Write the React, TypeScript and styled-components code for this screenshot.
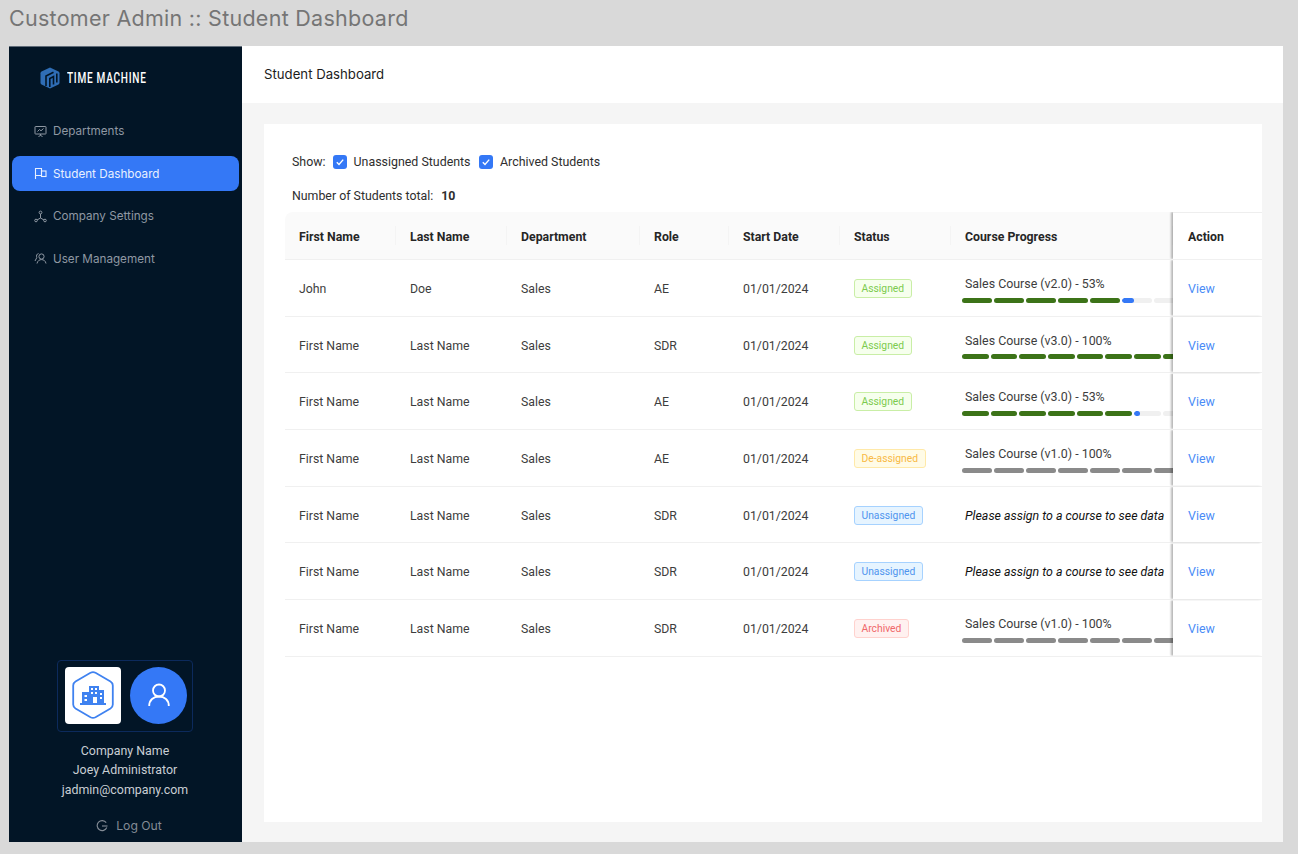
import React from 'react'
import styled, { createGlobalStyle } from 'styled-components'

const GlobalStyle = createGlobalStyle`
  html, body { margin: 0; padding: 0; background: #d9d9d9; }
  body { font-family: Roboto, "Liberation Sans", sans-serif; }
  * { box-sizing: border-box; }
`

const Page = styled.div`
  width: 1298px;
  height: 854px;
  overflow: hidden;
  padding: 0 15px 12px 9px;
  display: flex;
  flex-direction: column;
`
const PageTitle = styled.h1`
  margin: 0;
  height: 46px;
  padding-top: 5px;
  font: 400 21.5px/27px Inter, sans-serif;
  letter-spacing: 0.27px;
  color: #757575;
`
const Frame = styled.div`
  flex: 1;
  min-height: 0;
  display: flex;
`
const Sidebar = styled.aside`
  width: 233px;
  background: #021526;
  border-top: 1px solid #5f6b78;
  display: flex;
  flex-direction: column;
  align-items: center;
  padding: 0 3px 7px;
`
const Logo = styled.div`
  align-self: flex-start;
  height: 65px;
  padding: 0 0 3px 28px;
  display: flex;
  align-items: center;
  gap: 7px;
`
const LogoText = styled.span`
  display: inline-block;
  width: 80px;
  font: 500 14px/14px Roboto, sans-serif;
  color: #fff;
  white-space: nowrap;
  letter-spacing: 1px;
  transform: scaleX(0.72);
  transform-origin: left center;
`
const Nav = styled.nav`
  align-self: stretch;
  display: flex;
  flex-direction: column;
  gap: 7.5px;
  margin-top: 1.5px;
`
const NavItem = styled.a<{ $active?: boolean }>`
  height: 35px;
  padding-left: 22px;
  border-radius: 8px;
  display: flex;
  align-items: center;
  gap: 6px;
  font: 400 11.7px Inter, sans-serif;
  color: ${(p) => (p.$active ? '#e8f0ff' : '#8f98a3')};
  background: ${(p) => (p.$active ? '#3478f6' : 'transparent')};
  svg { flex: none; }
`
const Profile = styled.div`
  margin-top: auto;
  margin-right: 1px;
  width: 136px;
  height: 72px;
  border: 1px solid #0c2a5c;
  border-radius: 4px;
  padding: 6px 5px 6px 7px;
  display: flex;
  gap: 9px;
`
const CompanyTile = styled.div`
  flex: none;
  width: 56px;
  height: 57px;
  background: #fff;
  border-radius: 4px;
  display: flex;
  align-items: center;
  justify-content: center;
`
const Avatar = styled.div`
  flex: none;
  width: 57px;
  height: 57px;
  background: #3478f6;
  border-radius: 50%;
  display: flex;
  align-items: center;
  justify-content: center;
`
const ProfileText = styled.div`
  margin-top: 9px;
  margin-right: 1px;
  font: 400 12.4px/19.5px Roboto, sans-serif;
  color: #c9ced4;
  text-align: center;
`
const LogOut = styled.a`
  margin-top: 18px;
  margin-left: 7px;
  display: flex;
  align-items: center;
  gap: 8px;
  font: 400 12.2px/18px Inter, sans-serif;
  color: #838b95;
`
const Main = styled.main`
  flex: 1;
  min-width: 0;
  background: #f5f5f5;
  display: flex;
  flex-direction: column;
`
const Header = styled.header`
  height: 57px;
  background: #fff;
  padding: 0 0 2px 22px;
  display: flex;
  align-items: center;
  font: 400 13.2px Inter, sans-serif;
  color: #1c1c1c;
`
const Content = styled.div`
  flex: 1;
  min-height: 0;
  padding: 21px 21px 20px 22px;
  display: flex;
`
const Card = styled.section`
  flex: 1;
  background: #fff;
  padding: 28px 0 0 21px;
`
const FilterRow = styled.div`
  height: 19px;
  padding-left: 7px;
  display: flex;
  align-items: center;
  font-size: 12.4px;
  color: #2e2e2e;
`
const FilterLabel = styled.span`
  margin-right: 7px;
`
const CheckBox = styled.span`
  width: 14px;
  height: 14px;
  border-radius: 3px;
  background: #3478f6;
  margin-right: 7px;
  display: flex;
  align-items: center;
  justify-content: center;
`
const CheckLabel = styled.span`
  margin-right: 8.5px;
`
const TotalRow = styled.div`
  margin-top: 15px;
  height: 19px;
  padding-left: 7px;
  display: flex;
  align-items: center;
  gap: 8px;
  font-size: 12.35px;
  color: #2e2e2e;
  b { font-weight: 700; }
`
const Table = styled.div`
  margin-top: 7px;
`
const columns = '111px 111px 133px 89px 111px 111px 222px 89px'
const HeadRow = styled.div`
  display: grid;
  grid-template-columns: ${columns};
  height: 48px;
  background: #fafafa;
  border-bottom: 1px solid #f0f0f0;
  border-radius: 8px 0 0 0;
`
const HeadCell = styled.div`
  position: relative;
  padding: 2px 0 0 14px;
  display: flex;
  align-items: center;
  font-size: 12.3px;
  font-weight: 700;
  color: #262626;
  &::after {
    content: '';
    position: absolute;
    right: 0;
    top: 14px;
    bottom: 14px;
    width: 1px;
    background: #f4f4f4;
  }
`
const StickyHead = styled(HeadCell)`
  background: #fff;
  padding: 1px 0 0 15px;
  box-shadow: -2px 0 2px rgba(0, 0, 0, 0.28);
  clip-path: inset(0 0 0 -6px);
  border-top: 1px solid #eee;
  &::after { display: none; }
`
const Row = styled.div`
  display: grid;
  grid-template-columns: ${columns};
  height: 56.7px;
  border-bottom: 1px solid #f0f0f0;
`
const Cell = styled.div`
  padding: 2px 0 0 14px;
  display: flex;
  align-items: center;
  font-size: 12.3px;
  color: #3d3d3d;
`
const CourseCell = styled.div`
  padding-left: 11px;
  overflow: hidden;
  display: flex;
  flex-direction: column;
  justify-content: flex-start;
`
const CourseName = styled.div`
  margin-top: 15px;
  padding-left: 3px;
  height: 17px;
  font-size: 12.4px;
  line-height: 17px;
  color: #3d3d3d;
  white-space: nowrap;
`
const Hint = styled.div`
  padding: 2px 0 0 3px;
  height: 100%;
  display: flex;
  align-items: center;
  font-size: 12.38px;
  font-style: italic;
  color: #111;
  white-space: nowrap;
`
const Bar = styled.div`
  margin-top: 5.5px;
  display: flex;
  gap: 2px;
`
const Segment = styled.div<{ $color: string; $width: number }>`
  position: relative;
  flex: none;
  width: ${(p) => p.$width}px;
  height: 5px;
  border-radius: 3px;
  background: ${(p) => p.$color};
  overflow: hidden;
`
const SegmentFill = styled.div`
  height: 100%;
  border-radius: 3px;
  background: #3478f6;
`
const ActionCell = styled(Cell)`
  padding: 1px 0 0 15px;
  background: #fff;
  box-shadow: -2px 0 2px rgba(0, 0, 0, 0.28);
  clip-path: inset(0 0 0 -6px);
`
const ViewLink = styled.a`
  color: #4a8cf7;
  font-size: 12.4px;
`
const tagColors = {
  Assigned: { bg: '#f6ffed', border: '#c9eea6', text: '#7ccb4e' },
  'De-assigned': { bg: '#fffbe6', border: '#ffe9a8', text: '#f8b944' },
  Unassigned: { bg: '#e6f4ff', border: '#a6d2ff', text: '#4f94ee' },
  Archived: { bg: '#fff1f0', border: '#ffd2ce', text: '#f0686a' },
}
type Status = keyof typeof tagColors
const Tag = styled.span<{ $status: Status }>`
  height: 19px;
  margin-top: -1px;
  padding: 0 6.5px;
  border-radius: 3px;
  display: inline-flex;
  align-items: center;
  font-size: 10.3px;
  background: ${(p) => tagColors[p.$status].bg};
  border: 1px solid ${(p) => tagColors[p.$status].border};
  color: ${(p) => tagColors[p.$status].text};
`

type Progress = { name: string; width: number; done: number; part?: number; color: string }
type Student = { first: string; last: string; role: string; status: Status; course?: Progress }

const students: Student[] = [
  { first: 'John', last: 'Doe', role: 'AE', status: 'Assigned', course: { name: 'Sales Course (v2.0) - 53%', width: 30, done: 5, part: 12, color: '#3c7318' } },
  { first: 'First Name', last: 'Last Name', role: 'SDR', status: 'Assigned', course: { name: 'Sales Course (v3.0) - 100%', width: 26.7, done: 8, color: '#3c7318' } },
  { first: 'First Name', last: 'Last Name', role: 'AE', status: 'Assigned', course: { name: 'Sales Course (v3.0) - 53%', width: 26.7, done: 6, part: 6, color: '#3c7318' } },
  { first: 'First Name', last: 'Last Name', role: 'AE', status: 'De-assigned', course: { name: 'Sales Course (v1.0) - 100%', width: 30, done: 7, color: '#8a8a8a' } },
  { first: 'First Name', last: 'Last Name', role: 'SDR', status: 'Unassigned' },
  { first: 'First Name', last: 'Last Name', role: 'SDR', status: 'Unassigned' },
  { first: 'First Name', last: 'Last Name', role: 'SDR', status: 'Archived', course: { name: 'Sales Course (v1.0) - 100%', width: 30, done: 7, color: '#8a8a8a' } },
]

const ProgressBar = ({ course }: { course: Progress }) => {
  const total = course.width === 30 ? 7 : 8
  const segs = []
  for (let i = 0; i < total; i++) {
    const isDone = i < course.done
    segs.push(
      <Segment key={i} $width={course.width} $color={isDone ? course.color : '#f0f0f0'}>
        {i === course.done && course.part ? <SegmentFill style={{ width: course.part }} /> : null}
      </Segment>
    )
  }
  return <Bar>{segs}</Bar>
}

const LogoMark = () => (
  <svg width="20" height="22" viewBox="0 0 20 22" fill="none">
    <path d="M10 0.5 L18.5 4.6 Q19.5 5.1 19.5 6.2 V15.8 Q19.5 16.9 18.5 17.4 L10 21.5 L1.5 17.4 Q0.5 16.9 0.5 15.8 V6.2 Q0.5 5.1 1.5 4.6 Z" fill="#2f6db5" />
    <path d="M6 19 V9 L13.5 5.2 M9.8 20 V11.5 L13.5 9.6 V17.5 M16.8 6.5 V15.5" stroke="#021526" strokeWidth="1.6" />
  </svg>
)
const DepartmentsIcon = () => (
  <svg width="13" height="13" viewBox="0 0 13 13" fill="none" stroke="currentColor" strokeWidth="1">
    <rect x="1" y="1.5" width="11" height="7.5" rx="0.5" />
    <path d="M3.5 6.5 L5.5 4.5 L7 5.8 L9.5 3.5 M6.5 9 V10.5 M4.5 12 L6.5 10 L8.5 12" />
  </svg>
)
const DashboardIcon = () => (
  <svg width="13" height="13" viewBox="0 0 13 13" fill="none" stroke="currentColor" strokeWidth="1.1">
    <path d="M1.5 12 V1.5 H7.5 V8.5 H1.5" />
    <rect x="7.5" y="4" width="4.5" height="5.5" />
  </svg>
)
const SettingsIcon = () => (
  <svg width="13" height="13" viewBox="0 0 13 13" fill="none" stroke="currentColor" strokeWidth="1">
    <circle cx="6.5" cy="2.5" r="1.4" />
    <circle cx="2" cy="10.5" r="1.3" />
    <circle cx="11" cy="10.5" r="1.3" />
    <path d="M6.5 4 V8 M6.5 8 L3 10 M6.5 8 L10 10" />
  </svg>
)
const UsersIcon = () => (
  <svg width="13" height="13" viewBox="0 0 13 13" fill="none" stroke="currentColor" strokeWidth="1">
    <circle cx="7.5" cy="4.5" r="2.6" />
    <path d="M3 11.5 C3.5 8.8 5.5 7.6 7.5 7.6 C9.7 7.6 11.5 8.8 12 11.5" />
    <path d="M4.5 1.5 C2.8 2 2 3.6 2.8 5.6 L1 9" />
  </svg>
)
const LogOutIcon = () => (
  <svg width="12" height="12" viewBox="0 0 12 12" fill="none" stroke="currentColor" strokeWidth="1.1">
    <path d="M10.2 2.6 A5 5 0 1 0 10.8 7.5" />
    <path d="M6 6 H11.5" />
  </svg>
)
const BuildingIcon = () => (
  <svg width="42" height="48" viewBox="0 0 42 48" fill="none">
    <path d="M18.5 1.8 Q21 0.6 23.5 1.8 L38.5 10.4 Q40.8 11.8 40.8 14.4 V33.6 Q40.8 36.2 38.5 37.6 L23.5 46.2 Q21 47.4 18.5 46.2 L3.5 37.6 Q1.2 36.2 1.2 33.6 V14.4 Q1.2 11.8 3.5 10.4 Z" stroke="#3f82f0" strokeWidth="1.8" />
    <path fillRule="evenodd" fill="#3f82f0" d="M10 21 H17 V15 H27 V19 H32 V32 H34 V34 H8 V32 H10 Z M12.5 24 V26 H15 V24 Z M12.5 28 V30 H15 V28 Z M19 17 V19 H21 V17 Z M23 17 V19 H25 V17 Z M19 21 V23 H21 V21 Z M23 21 V23 H25 V21 Z M21 26 V32 H25 V26 Z M28 22 V24 H30 V22 Z M28 26 V28 H30 V26 Z" />
  </svg>
)
const AvatarIcon = () => (
  <svg width="22" height="24" viewBox="0 0 22 24" fill="none" stroke="#fff" strokeWidth="1.8">
    <circle cx="11" cy="7.5" r="6" />
    <path d="M1.2 23 C1.2 17 5.5 13.5 11 13.5 C16.5 13.5 20.8 17 20.8 23" />
  </svg>
)
const Check = () => (
  <svg width="10" height="10" viewBox="0 0 10 10" fill="none" stroke="#fff" strokeWidth="1.4">
    <path d="M1.8 5.2 L4 7.4 L8.2 2.6" />
  </svg>
)

const App = () => {
  return (
    <Page>
      <GlobalStyle />
      <PageTitle>Customer Admin :: Student Dashboard</PageTitle>
      <Frame>
        <Sidebar>
          <Logo>
            <LogoMark />
            <LogoText>TIME MACHINE</LogoText>
          </Logo>
          <Nav>
            <NavItem><DepartmentsIcon />Departments</NavItem>
            <NavItem $active><DashboardIcon />Student Dashboard</NavItem>
            <NavItem><SettingsIcon />Company Settings</NavItem>
            <NavItem><UsersIcon />User Management</NavItem>
          </Nav>
          <Profile>
            <CompanyTile><BuildingIcon /></CompanyTile>
            <Avatar><AvatarIcon /></Avatar>
          </Profile>
          <ProfileText>
            <div>Company Name</div>
            <div>Joey Administrator</div>
            <div>jadmin@company.com</div>
          </ProfileText>
          <LogOut><LogOutIcon />Log Out</LogOut>
        </Sidebar>
        <Main>
          <Header>Student Dashboard</Header>
          <Content>
            <Card>
              <FilterRow>
                <FilterLabel>Show:</FilterLabel>
                <CheckBox><Check /></CheckBox>
                <CheckLabel>Unassigned Students</CheckLabel>
                <CheckBox><Check /></CheckBox>
                <CheckLabel>Archived Students</CheckLabel>
              </FilterRow>
              <TotalRow>Number of Students total: <b>10</b></TotalRow>
              <Table>
                <HeadRow>
                  <HeadCell>First Name</HeadCell>
                  <HeadCell>Last Name</HeadCell>
                  <HeadCell>Department</HeadCell>
                  <HeadCell>Role</HeadCell>
                  <HeadCell>Start Date</HeadCell>
                  <HeadCell>Status</HeadCell>
                  <HeadCell>Course Progress</HeadCell>
                  <StickyHead>Action</StickyHead>
                </HeadRow>
                {students.map((s, i) => (
                  <Row key={i}>
                    <Cell>{s.first}</Cell>
                    <Cell>{s.last}</Cell>
                    <Cell>Sales</Cell>
                    <Cell>{s.role}</Cell>
                    <Cell>01/01/2024</Cell>
                    <Cell><Tag $status={s.status}>{s.status}</Tag></Cell>
                    <CourseCell>
                      {s.course ? (
                        <>
                          <CourseName>{s.course.name}</CourseName>
                          <ProgressBar course={s.course} />
                        </>
                      ) : (
                        <Hint>Please assign to a course to see data</Hint>
                      )}
                    </CourseCell>
                    <ActionCell><ViewLink>View</ViewLink></ActionCell>
                  </Row>
                ))}
              </Table>
            </Card>
          </Content>
        </Main>
      </Frame>
    </Page>
  )
}

export default App
